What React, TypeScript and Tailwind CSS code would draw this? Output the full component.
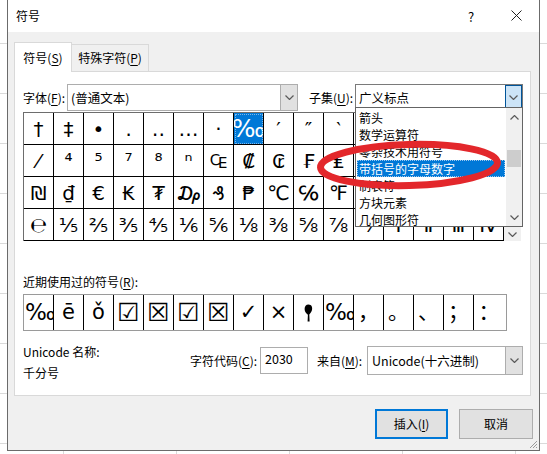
import React from "react";

const ui = "font-['Noto_Sans_CJK_SC','Noto_Sans',sans-serif]";
const glyph = "font-['DejaVu_Sans','Noto_Sans','Noto_Sans_CJK_SC',sans-serif]";

// symbol grid, 16 columns x 4 rows
const rows: string[][] = [
  ["†", "‡", "•", "․", "‥", "…", "‧", "‰", "′", "″", "‵", "※", "‼", "‾", "⁂", "⁃"],
  ["⁄", "⁴", "⁵", "⁷", "⁸", "ⁿ", "₠", "₡", "₢", "₣", "₤", "₥", "₦", "₧", "₨", "₩"],
  ["₪", "₫", "€", "₭", "₮", "₯", "₰", "₱", "℃", "℅", "℉", "ℓ", "№", "℡", "™", "Ω"],
  ["℮", "⅕", "⅖", "⅗", "⅘", "⅙", "⅚", "⅛", "⅜", "⅝", "⅞", "⅟", "Ⅰ", "Ⅱ", "Ⅲ", "Ⅳ"],
];

const recent = ["‰", "ē", "ǒ", "☑", "☒", "☑", "☒", "✓", "×", "pin", "‱", "，", "。", "、", "；", "："];

const subsets = ["箭头", "数学运算符", "零杂技术用符号", "带括号的字母数字", "制表符", "方块元素", "几何图形符"];

function Key({ k }: { k: string }) {
  return <span className="underline underline-offset-[2px]">{k}</span>;
}

function Chevron({ up = false }: { up?: boolean }) {
  return (
    <svg width="9" height="5" viewBox="0 0 9 5" className={up ? "rotate-180" : ""}>
      <polyline points="0.5,0.5 4.5,4.5 8.5,0.5" fill="none" stroke="#5a5a5a" strokeWidth="1.2" />
    </svg>
  );
}

function Pin() {
  return (
    <svg width="9" height="18" viewBox="0 0 9 18">
      <path d="M4.5 0.5 C7.8 0.5 8.6 3.5 8 6 C7.4 8.2 6 9.5 5.3 10.5 L5.6 17.5 L3.6 17.5 L3.9 10.8 C2.4 9.6 0.6 8 0.6 5 C0.6 2.4 2 0.5 4.5 0.5 Z" fill="#000" />
    </svg>
  );
}

function SymbolGrid() {
  return (
    <div className="flex mt-[1px]">
      <div className="w-[481px] h-[129px] border-l border-t border-[#6d6d6d] grid grid-cols-[repeat(16,30px)]">
        {rows.flat().map((c, i) => {
          const selected = c === "‰";
          return (
            <div
              key={i}
              className={`h-[32px] border-r border-b border-black flex items-center justify-center overflow-hidden leading-none ${glyph} ${
                selected ? "bg-[#0078d7] text-white text-[25px] outline-1 outline-dotted outline-offset-[-2px] outline-[#7fb8e8]" : "text-[#000] text-[20px]"
              }`}
            >
              {c}
            </div>
          );
        })}
      </div>
      <div className="w-[17px] h-[129px] bg-[#f0f0f0] flex flex-col justify-between items-center py-[4px]">
        <Chevron up />
        <Chevron />
      </div>
    </div>
  );
}

function RecentRow() {
  return (
    <div className="w-[484px] h-[37px] border border-[#9a9a9a] flex">
      {recent.map((c, i) => {
        const box = c === "☑" || c === "☒";
        const wide = c === "‰" || c === "‱";
        return (
          <div
            key={i}
            className={`w-[30px] h-full flex items-center overflow-hidden leading-none ${glyph} ${
              i < 15 ? "border-r border-black" : ""
            } ${wide ? "justify-start pl-[1px] text-[23px]" : box ? "justify-center text-[25px]" : "justify-center text-[21px]"} ${
              i === 3 || i === 4 ? "font-bold" : ""
            }`}
          >
            {c === "pin" ? <Pin /> : c}
          </div>
        );
      })}
    </div>
  );
}

function SubsetList() {
  return (
    <div className="absolute left-[340px] top-[35px] w-[168px] h-[120px] bg-white border border-[#646464] flex z-10">
      <div className="w-[150px] pt-[1px]">
        {subsets.map((s, i) => (
          <div
            key={s}
            className={`h-[17px] leading-[17px] text-[12px] pl-[2px] mx-px whitespace-nowrap ${
              i === 3 ? "bg-[#0078d7] text-white outline-1 outline-dotted outline-offset-[-1px] outline-[#9cc8ef]" : "text-black"
            }`}
          >
            {s}
          </div>
        ))}
      </div>
      <div className="w-[16px] bg-[#f0f0f0] flex flex-col items-center">
        <div className="h-[18px] flex items-center">
          <Chevron up />
        </div>
        <div className="h-[24px]" />
        <div className="w-[14px] h-[17px] bg-[#cdcdcd]" />
        <div className="flex-1" />
        <div className="h-[18px] flex items-center">
          <Chevron />
        </div>
      </div>
    </div>
  );
}

export default function App() {
  return (
    <div
      className={`relative w-[547px] h-[454px] overflow-hidden bg-white bg-[linear-gradient(to_bottom,#dadada_1px,transparent_1px),linear-gradient(to_right,#dadada_1px,transparent_1px)] bg-[length:113px_50px] bg-[position:63px_43px] ${ui}`}
    >
      {/* dialog window */}
      <div className="absolute left-[7px] top-0 w-[533px] h-[451px] border-l border-r border-b border-[#6b6b6b] bg-[#f0f0f0] text-black">
        <div className="h-[32px] bg-white flex items-center text-[12px] relative">
          <span className="pl-[8px]">符号</span>
          <span className="absolute left-[460px] top-[7px] text-[13px]">?</span>
          <svg className="absolute left-[503px] top-[10px]" width="11" height="11" viewBox="0 0 11 11">
            <path d="M0.5 0.5 L10.5 10.5 M10.5 0.5 L0.5 10.5" stroke="#222" strokeWidth="1" />
          </svg>
        </div>

        {/* tabs */}
        <div className="flex items-end h-[29px] mt-[10px] ml-[6px] relative z-10">
          <div className="w-[58px] h-[30px] -mb-px bg-white border border-b-0 border-[#d9d9d9] flex items-center justify-center text-[12px]">
            <span>
              符号(<Key k="S" />)
            </span>
          </div>
          <div className="w-[77px] h-[27px] bg-[#f0f0f0] border border-l-0 border-b-0 border-[#d9d9d9] flex items-center justify-center text-[12px]">
            <span>
              特殊字符(<Key k="P" />)
            </span>
          </div>
        </div>

        <div className="ml-[6px] w-[517px] h-[325px] bg-white border border-[#d9d9d9] relative pl-[8px] pt-[12px] text-[12px]">
          {/* font & subset */}
          <div className="flex items-center h-[27px]">
            <span className="w-[44px] whitespace-nowrap">
              字体(<Key k="F" />):
            </span>
            <div className="w-[231px] h-[27px] border border-[#adadad] bg-white flex">
              <span className="flex-1 pl-[3px] leading-[25px] text-[12.5px]">(普通文本)</span>
              <div className="w-[17px] h-full bg-[#e1e1e1] border-l border-[#adadad] flex items-center justify-center">
                <Chevron />
              </div>
            </div>
            <span className="ml-[11px] w-[46px] whitespace-nowrap">
              子集(<Key k="U" />):
            </span>
            <div className="w-[168px] h-[28px] border border-[#7a7a7a] bg-white flex">
              <span className="flex-1 pl-[3px] leading-[26px] text-[12.5px]">广义标点</span>
              <div className="w-[17px] h-full bg-[#cce4f7] border border-[#005499] flex items-center justify-center">
                <Chevron />
              </div>
            </div>
          </div>

          <SymbolGrid />

          <div className="mt-[33px] h-[16px] leading-[16px]">
            近期使用过的符号(<Key k="R" />):
          </div>
          <div className="mt-[4px]">
            <RecentRow />
          </div>

          <div className="flex mt-[13px]">
            <div className="w-[167px]">
              <div className="h-[16px] leading-[16px]">Unicode 名称:</div>
              <div className="mt-[5px] h-[16px] leading-[16px]">千分号</div>
            </div>
            <div className="flex items-center h-[29px] mt-[2px]">
              <span className="w-[70px] whitespace-nowrap">
                字符代码(<Key k="C" />):
              </span>
              <div className="w-[48px] h-[27px] border border-[#adadad] bg-white pl-[4px] leading-[22px] text-[12.5px]">2030</div>
              <span className="ml-[9px] w-[50px] whitespace-nowrap">
                来自(<Key k="M" />):
              </span>
              <div className="w-[156px] h-[29px] border border-[#adadad] bg-white flex">
                <span className="flex-1 pl-[4px] leading-[27px] text-[12.5px]">Unicode(十六进制)</span>
                <div className="w-[17px] h-full bg-[#e1e1e1] border-l border-[#adadad] flex items-center justify-center">
                  <Chevron />
                </div>
              </div>
            </div>
          </div>

          <SubsetList />
        </div>

        {/* buttons */}
        <div className="flex justify-end gap-[11px] pr-[6px] mt-[13px] text-[12px]">
          <button className="w-[73px] h-[30px] bg-[#e1e1e1] border-2 border-[#0078d7] flex items-center justify-center">
            插入(<Key k="I" />)
          </button>
          <button className="w-[74px] h-[30px] bg-[#e1e1e1] border border-[#adadad] flex items-center justify-center">
            取消
          </button>
        </div>

        <svg className="absolute right-[1px] bottom-[1px]" width="10" height="10" viewBox="0 0 10 10">
          <path d="M9 2 L2 9 M9 5 L5 9 M9 8 L8 9" stroke="#9a9a9a" strokeWidth="1" />
        </svg>
      </div>

      {/* red highlight ellipse drawn over the dialog */}
      <svg className="absolute z-20 left-[310px] top-[135px] pointer-events-none" width="200" height="62" viewBox="0 0 200 62">
        <ellipse cx="99" cy="30" rx="88.5" ry="20.5" fill="none" stroke="#e3272b" strokeWidth="7" transform="rotate(-1.5 99 30)" />
      </svg>
    </div>
  );
}
